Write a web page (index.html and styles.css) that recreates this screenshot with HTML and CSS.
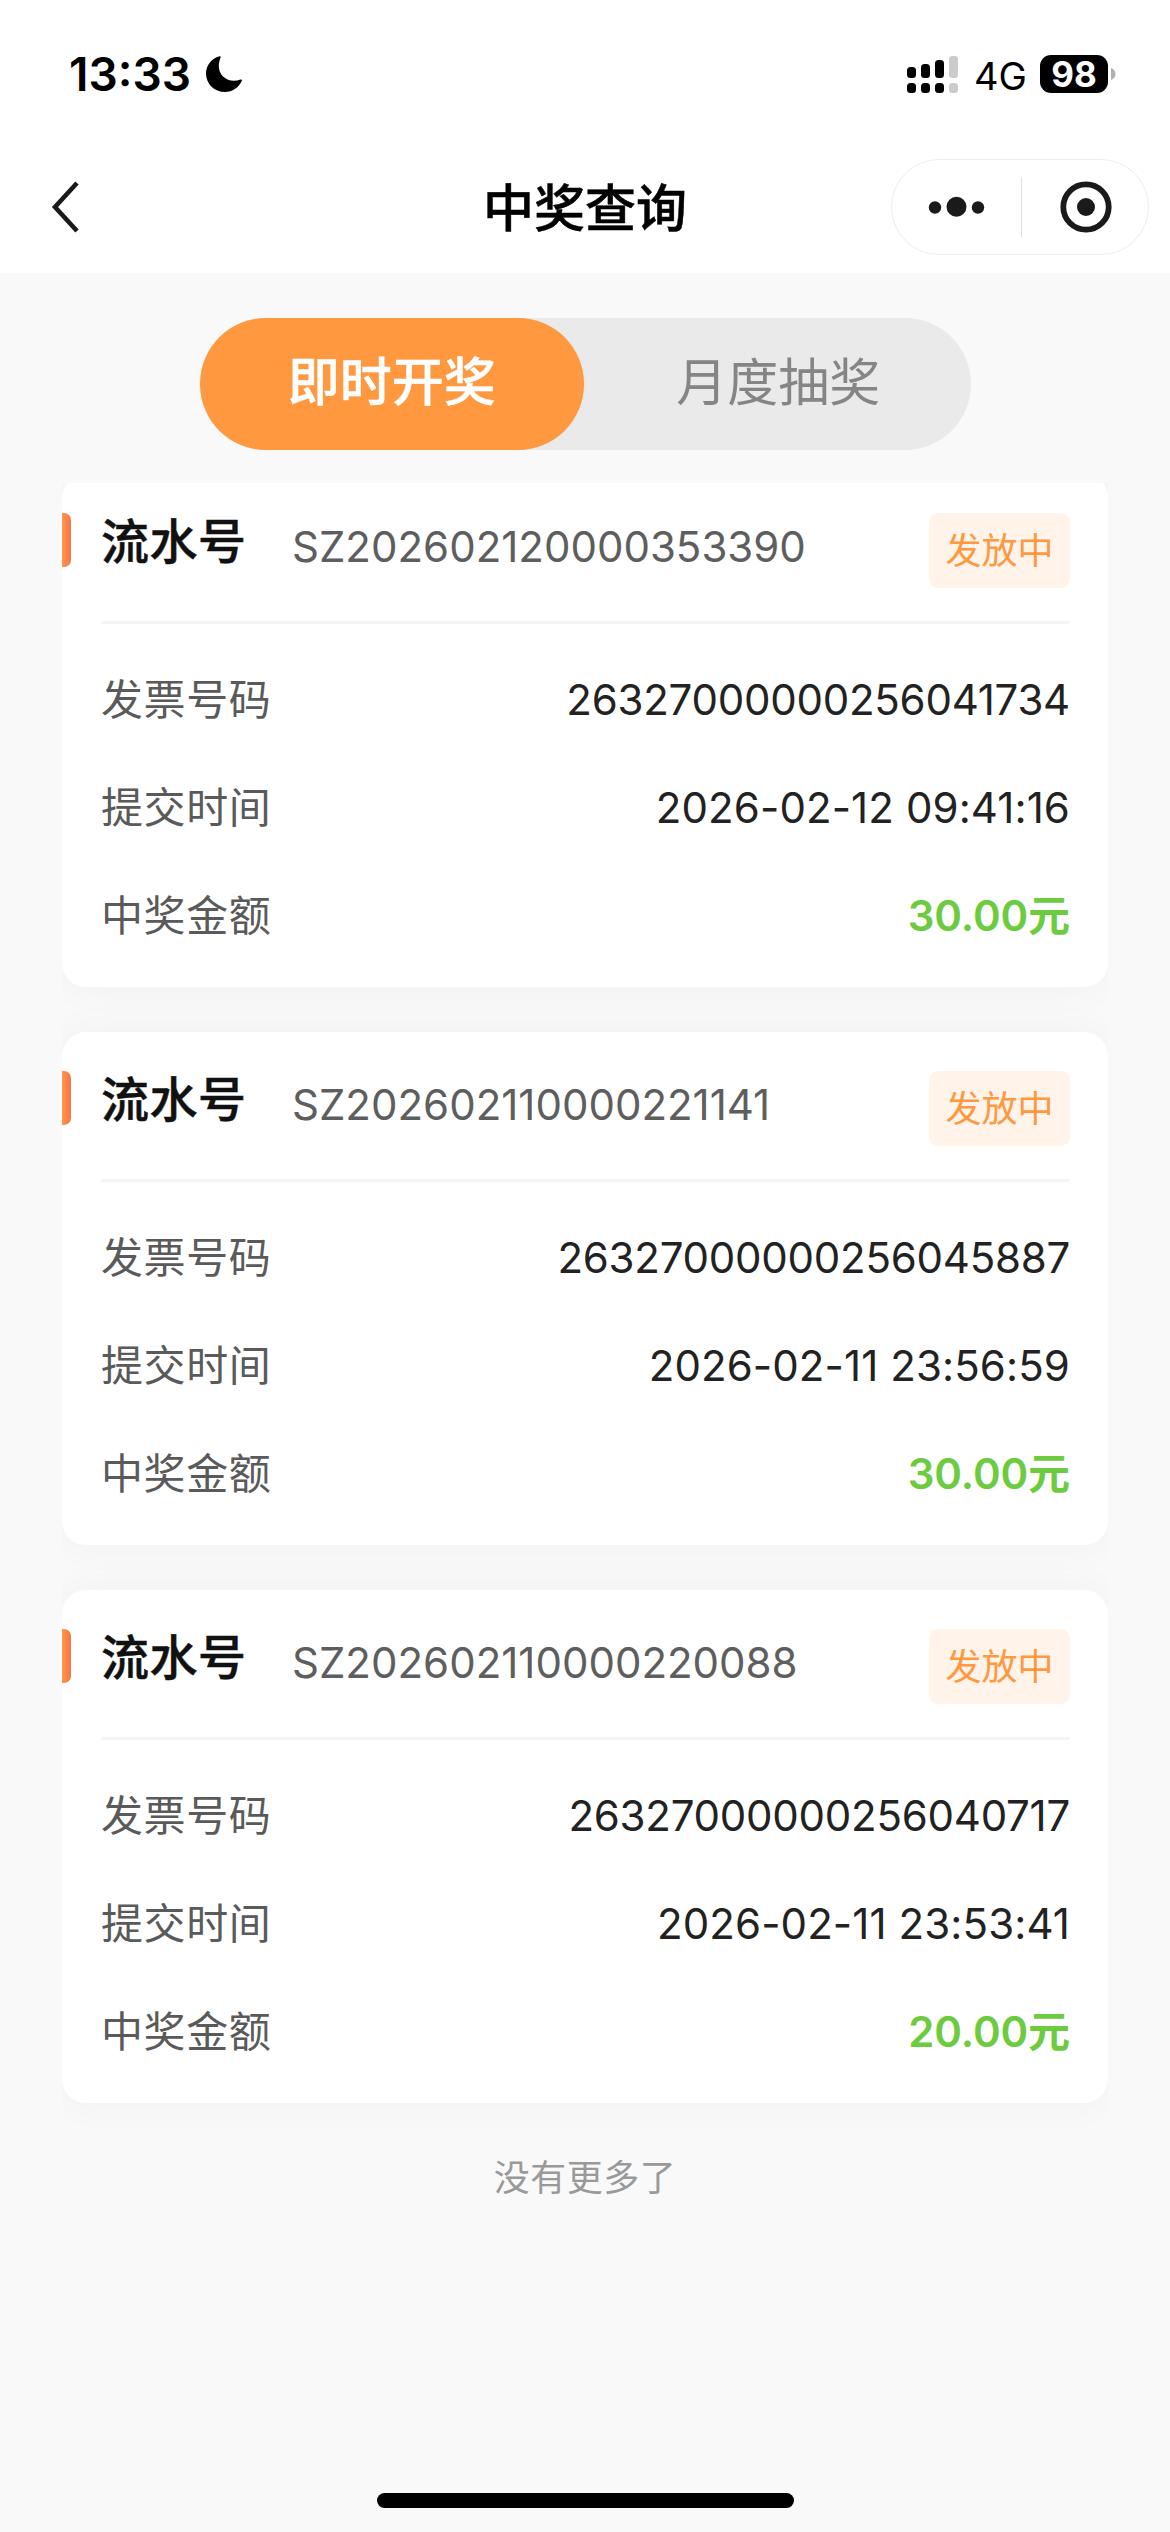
FILE: index.html
```html
<!DOCTYPE html>
<html lang="zh-CN">
<head>
<meta charset="utf-8">
<title>中奖查询</title>
<link rel="stylesheet" href="styles.css">
</head>
<body>
<header class="header">
  <div class="status">
    <div class="status-left">
      <span class="time">13:33</span>
      <svg class="moon" width="36" height="36" viewBox="0 0 36 36"><path d="M13.5 .3C14.6 0 15 .7 14.600 1.600C11.500 9 12.500 16 17 20.500C21.500 24.800 28 26 34.500 23.600C35.500 23.200 36.200 23.700 35.800 24.800C33 31.500 26.500 36 19 36C8.500 36 0 28 0 17.500C0 9.500 5.500 2.500 13.500 .3Z"/></svg>
    </div>
    <div class="status-right">
      <svg class="signal" width="51" height="38" viewBox="0 0 51 38">
        <rect x="0" y="12" width="9" height="11" rx="3.500"/><rect x="14" y="9" width="9" height="14" rx="3.500"/><rect x="28" y="5" width="9" height="18" rx="3.500"/><rect class="off" x="42" y="1" width="9" height="22" rx="3.500"/>
        <rect x="0" y="28" width="9" height="10" rx="3.500"/><rect x="14" y="28" width="9" height="10" rx="3.500"/><rect x="28" y="28" width="9" height="10" rx="3.500"/><rect class="off" x="42" y="28" width="9" height="10" rx="3.500"/>
      </svg>
      <span class="network">4G</span>
      <span class="battery">98</span>
      <svg class="nub" width="5" height="12" viewBox="0 0 5 12"><path d="M0 0C3 1 4.500 3.500 4.500 6S3 11 0 12Z"/></svg>
    </div>
  </div>
  <nav class="nav">
    <svg class="back" width="30" height="52" viewBox="0 0 30 52"><path d="M27 2L5 26L27 50"/></svg>
    <h1 class="nav-title">中奖查询</h1>
    <div class="capsule">
      <svg class="more" width="52" height="22" viewBox="0 0 52 22"><circle cx="7" cy="11.500" r="6.200"/><circle cx="28.500" cy="10.800" r="10"/><circle cx="50" cy="11.500" r="6.200"/></svg>
      <span class="capsule-line"></span>
      <svg class="target" width="52" height="52" viewBox="0 0 52 52"><circle class="ring" cx="26" cy="26" r="22.700"/><circle cx="26" cy="26" r="9"/></svg>
    </div>
  </nav>
</header>
<main class="page">
  <div class="tabs">
    <div class="tab active">即时开奖</div>
    <div class="tab">月度抽奖</div>
  </div>
  <div class="scroll">
    <div class="list">
      <section class="card">
        <div class="card-head"><h2 class="card-title">流水号</h2><span class="serial">SZ202602120000353390</span><span class="badge">发放中</span></div>
        <div class="row"><span class="label">发票号码</span><span class="value invoice">26327000000256041734</span></div>
        <div class="row"><span class="label">提交时间</span><span class="value date">2026-02-12 09:41:16</span></div>
        <div class="row"><span class="label">中奖金额</span><span class="value amount">30.00元</span></div>
      </section>
      <section class="card">
        <div class="card-head"><h2 class="card-title">流水号</h2><span class="serial">SZ202602110000221141</span><span class="badge">发放中</span></div>
        <div class="row"><span class="label">发票号码</span><span class="value invoice">26327000000256045887</span></div>
        <div class="row"><span class="label">提交时间</span><span class="value date">2026-02-11 23:56:59</span></div>
        <div class="row"><span class="label">中奖金额</span><span class="value amount">30.00元</span></div>
      </section>
      <section class="card">
        <div class="card-head"><h2 class="card-title">流水号</h2><span class="serial">SZ202602110000220088</span><span class="badge">发放中</span></div>
        <div class="row"><span class="label">发票号码</span><span class="value invoice">26327000000256040717</span></div>
        <div class="row"><span class="label">提交时间</span><span class="value date">2026-02-11 23:53:41</span></div>
        <div class="row"><span class="label">中奖金额</span><span class="value amount">20.00元</span></div>
      </section>
    </div>
    <p class="end">没有更多了</p>
  </div>
  <div class="home-bar"></div>
</main>
</body>
</html>
```
FILE: styles.css
```css
* { box-sizing: border-box; margin: 0; padding: 0; }

body {
  width: 1170px;
  height: 2532px;
  overflow: hidden;
  display: flex;
  flex-direction: column;
  background: #f9f9f9;
  font-family: Inter, "Noto Sans CJK SC", sans-serif;
}

.header { height: 273px; background: #fff; flex: none; }

.status { height: 148px; padding: 0 54px 0 69px; display: flex; justify-content: space-between; align-items: center; }
.status-left, .status-right { display: flex; align-items: center; }
.time { font-size: 46px; font-weight: 600; letter-spacing: 0; line-height: 60px; color: #000; }
.moon { margin-left: 15px; }
.signal { margin-right: 16px; }
.off { fill: #cbcbcb; }
.network { width: 66px; font-size: 38px; line-height: 46px; padding-top: 3px; color: #000; }
.battery {
  width: 68px; height: 38px; border-radius: 11px; background: #000; color: #fff;
  font-size: 35px; font-weight: 700; line-height: 38px; text-align: center;
}
.nub { fill: #b0b0b0; margin-left: 3px; }

.nav { height: 118px; padding: 0 21px 0 50px; display: grid; grid-template-columns: 258px 1fr 258px; align-items: center; }
.back { fill: none; stroke: #1a1a1a; stroke-width: 4.6; }
.nav-title { font-size: 51px; font-weight: 500; -webkit-text-stroke: 0.5px; line-height: 74px; padding: 3px 29px 0 0; text-align: center; color: #000; }
.capsule { width: 258px; height: 96px; border: 1px solid #ececec; border-radius: 48px; display: flex; align-items: center; fill: #1a1a1a; padding-left: 36px; }
.more { overflow: visible; }
.capsule-line { width: 1px; height: 60px; margin-left: 41px; background: #e0e0e0; }
.target { margin-left: 38px; }
.ring { fill: none; stroke: #1a1a1a; stroke-width: 5.8; }

.page { flex: 1; display: flex; flex-direction: column; align-items: center; padding: 45px 0 24px; }

.tabs { display: flex; width: 771px; height: 132px; border-radius: 66px; background: #eaeaea; flex: none; }
.tab { flex: 1; padding-left: 2px; text-align: center; font-size: 51px; line-height: 129px; color: #858585; }
.tab.active { border-radius: 66px; padding-left: 0; background: #ff983f; color: #fff; font-weight: 500; font-size: 52px; -webkit-text-stroke: 0.5px; }

.scroll { width: 1046px; margin-top: 33px; overflow: hidden; flex: 1; }
.list { display: flex; flex-direction: column; gap: 45px; margin-top: -9px; }

.card { height: 513px; padding: 0 38px 0 39px; border-radius: 24px; background: #fff; box-shadow: 0 0 40px rgba(110, 30, 0, 0.04); position: relative; }
.card::before {
  content: ""; position: absolute; left: -9px; top: 39px; width: 18px; height: 54px;
  border-radius: 7px; background: linear-gradient(90deg, #ffae3a, #ff9747 50%, #f5744f);
}
.card-head { display: flex; align-items: flex-start; height: 150px; padding-top: 39px; margin-bottom: 21px; border-bottom: 3px solid #f5f5f5; }
.card-title { width: 191px; font-size: 48px; font-weight: 500; -webkit-text-stroke: 0.5px; letter-spacing: 0.5px; line-height: 57px; color: #111; }
.serial { flex: 1; font-size: 42px; line-height: 67px; color: #5e5e5e; }
.badge { width: 141px; height: 75px; border-radius: 9px; background: #fff3ea; color: #ff983f; font-size: 36px; line-height: 77px; text-align: center; }

.row { display: flex; justify-content: space-between; align-items: center; height: 108px; }
.label { font-size: 42px; letter-spacing: 0.6px; padding-bottom: 6px; color: #5a5a5a; }
.value { font-size: 42px; color: #222; }
.invoice { letter-spacing: -0.24px; }
.date { letter-spacing: 0.1px; }
.amount { color: #6ccb3f; font-weight: 600; padding-bottom: 6px; letter-spacing: -0.1px; }

.end { margin-top: 49px; text-align: center; font-size: 36px; letter-spacing: 0.5px; line-height: 52px; color: #999; }
.home-bar { width: 417px; height: 15px; border-radius: 8px; background: #000; flex: none; }
```
